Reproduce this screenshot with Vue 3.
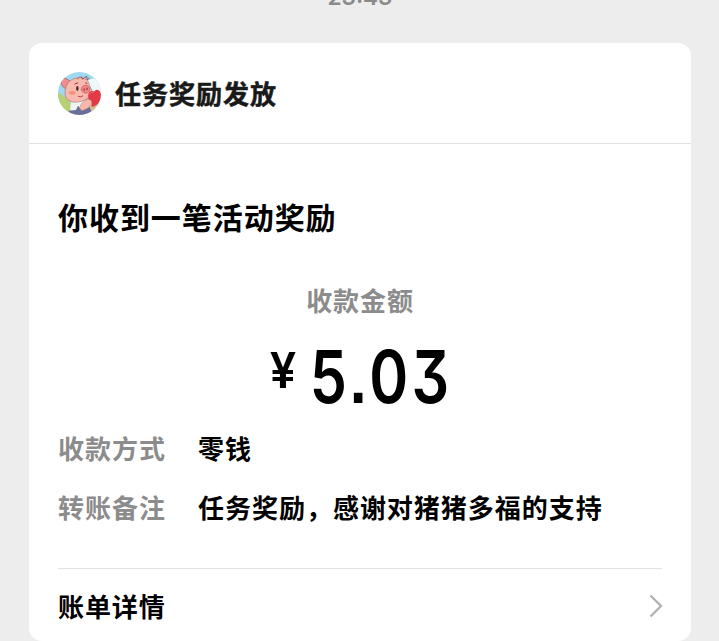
<template>
  <div class="chat">
    <div class="time">23:43</div>

    <section class="card">
      <header class="card-header">
        <svg class="avatar" viewBox="0 0 60 60">
          <defs>
            <clipPath id="avatar-clip"><circle cx="30" cy="30" r="30" /></clipPath>
          </defs>
          <g clip-path="url(#avatar-clip)">
            <rect width="60" height="60" fill="#9ed8f3" />
            <path d="M42 12q8-6 20-2v26H42z" fill="#eef8fa" />
            <path d="M0 29q10 4 18 15l8 16H0z" fill="#b9cf74" />
            <path d="M44 48l16-6v18H42z" fill="#d8bd87" />
            <!-- ropa -->
            <path d="M22 36q-7 8-4 24h14l6-22z" fill="#eef3f3" />
            <path d="M15 54l10-1 3-6 5 6 11-4 5 11H15z" fill="#696f98" />
            <!-- cabeza -->
            <path d="M14 24Q4 22 4 13q1-6 7-4l9 6z" fill="#f18c91" stroke="#8a4a4e" stroke-width=".8" />
            <path d="M10 26Q12 9 29 8q14 0 15 11l4 8q0 7-6 9-8 7-21 6-13-3-11-16z" fill="#fab9ae" stroke="#9a5a58" stroke-width=".7" />
            <path d="M27 10q3-4 6-3l1 3 6-4 1 5 3-3" fill="#fab9ae" stroke="#713c40" stroke-width="1" />
            <ellipse cx="20" cy="29" rx="5" ry="2.6" fill="#f4917f" />
            <ellipse cx="27" cy="23" rx="1.7" ry="3.4" fill="#49282b" />
            <path d="M23 17l5-2M38 15l3 1" stroke="#713c40" stroke-width="1.3" />
            <ellipse cx="38.500" cy="24" rx="6" ry="5.500" fill="#f28786" stroke="#a8555a" stroke-width=".8" />
            <path d="M36.500 23v3M40.500 22v3" stroke="#7e3038" stroke-width="1.5" />
            <path d="M28 34q4 2 7-1" fill="none" stroke="#8e3d40" stroke-width="1.2" />
            <!-- corazón -->
            <path d="M48 49q-6-9-6-15 0-9 9-7 1-3 5-2 5 2 4 12-2 8-12 12z" fill="#e23b46" />
            <path d="M45 30q2-3 5-2" fill="none" stroke="#e87a7b" stroke-width="1.2" />
            <path d="M30 50q3-9 12-12 6 1 5 7-5 7-14 9z" fill="#f9b8ac" stroke="#bd7771" stroke-width=".7" />
          </g>
        </svg>
        <h1 class="name">任务奖励发放</h1>
      </header>

      <div class="card-body">
        <h2 class="title">你收到一笔活动奖励</h2>
        <div class="amount-label">收款金额</div>
        <div class="amount">
          <span class="currency">¥</span>
          <span class="value">5.03</span>
        </div>

        <dl class="details">
          <div v-for="row in rows" :key="row.label" class="row">
            <dt>{{ row.label }}</dt>
            <dd>{{ row.value }}</dd>
          </div>
        </dl>

        <footer class="bill">
          <span>账单详情</span>
          <svg class="arrow" viewBox="0 0 14 24">
            <path d="M1.5 1.5L12 12L1.5 22.5" />
          </svg>
        </footer>
      </div>
    </section>
  </div>
</template>

<script setup>
const rows = [
  { label: '收款方式', value: '零钱' },
  { label: '转账备注', value: '任务奖励，感谢对猪猪多福的支持' }
]
</script>

<style>
body {
  background: #ededed;
  overflow: hidden;
}
</style>

<style scoped>
.chat {
  box-sizing: border-box;
  height: 641px;
  padding: 0 28px 0 29px;
  overflow: hidden;
  font-family: "Noto Sans CJK SC", sans-serif;
  font-weight: 700;
  color: #000;
}

.time {
  height: 30px;
  margin-top: -18px;
  margin-bottom: 31px;
  font: 600 22.5px/30px Inter, sans-serif;
  text-align: center;
  color: #8a8a8a;
}

.card {
  height: 598px;
  background: #fff;
  border-radius: 13px;
}

.card-header {
  box-sizing: border-box;
  display: flex;
  align-items: center;
  height: 101px;
  padding: 0 29px;
  border-bottom: 1px solid #e2e2e2;
}

.avatar {
  width: 43px;
  height: 43px;
  margin-right: 14px;
}

.name {
  margin: 0;
  font-size: 26px;
  line-height: 38px;
  letter-spacing: 1px;
  color: #191919;
  -webkit-text-stroke: 0.5px #191919;
}

.card-body {
  padding: 50px 29px 0;
}

.title {
  margin: 0;
  font-size: 30px;
  line-height: 44px;
  letter-spacing: 0.95px;
}

.amount-label {
  margin-top: 43px;
  font-size: 26px;
  line-height: 38px;
  letter-spacing: 0.9px;
  text-align: center;
  color: #8c8c8c;
}

.amount {
  display: flex;
  justify-content: center;
  height: 110px;
  padding-left: 18px;
  font-family: Inter, sans-serif;
  font-weight: 600;
}

.currency {
  margin-top: 19px;
  font-size: 50px;
  line-height: 64px;
  transform: scaleX(0.94);
}

.value {
  margin-left: -4px;
  font-size: 73px;
  line-height: 115px;
  letter-spacing: 4px;
  font-feature-settings: "cv09", "ss07";
  transform: scaleX(0.81);
}

.details {
  margin: 0;
}

.row {
  display: flex;
  height: 59px;
  font-size: 26px;
  line-height: 38px;
  letter-spacing: 0.98px;
}

.row dt {
  width: 140px;
  color: #8c8c8c;
}

.row dd {
  margin: 0;
}

.bill {
  display: flex;
  align-items: center;
  justify-content: space-between;
  box-sizing: border-box;
  height: 75px;
  margin-top: 21px;
  border-top: 1px solid #e2e2e2;
  font-size: 26px;
  letter-spacing: 0.9px;
}

.bill span {
  padding-bottom: 2px;
}

.arrow {
  width: 14px;
  height: 24px;
  margin-right: -1px;
}

.arrow path {
  fill: none;
  stroke: #b2b2b2;
  stroke-width: 2.4;
}
</style>
